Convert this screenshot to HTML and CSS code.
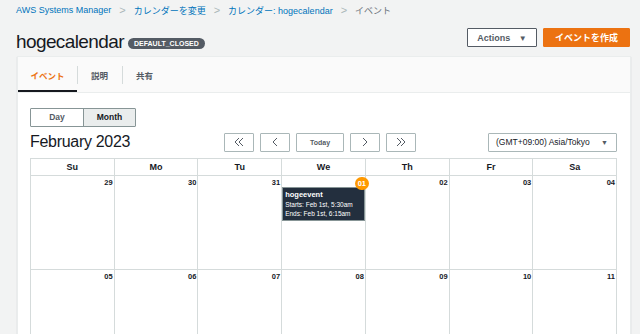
FILE: index.html
```html
<!DOCTYPE html>
<html lang="ja">
<head>
  <meta charset="UTF-8">
  <title>hogecalendar</title>
  <link rel="stylesheet" href="styles.css">
</head>
<body>
  <div class="breadcrumb">
    <a href="#">AWS Systems Manager</a>
    <span class="sep">&gt;</span>
    <a href="#">カレンダーを変更</a>
    <span class="sep">&gt;</span>
    <a href="#">カレンダー: hogecalendar</a>
    <span class="sep">&gt;</span>
    <span class="current">イベント</span>
  </div>

  <div class="header">
    <div class="title">
      <h1>hogecalendar</h1>
      <span class="badge">DEFAULT_CLOSED</span>
    </div>
    <div class="actions">
      <button type="button" class="btn">Actions <span class="caret">&#9660;</span></button>
      <button type="button" class="btn primary">イベントを作成</button>
    </div>
  </div>

  <div class="card">
    <div class="tabs">
      <div class="tab active">イベント</div>
      <div class="tab">説明</div>
      <div class="tab">共有</div>
    </div>
    <div class="content">
      <div class="segmented">
        <button type="button">Day</button>
        <button type="button" class="on">Month</button>
      </div>

      <div class="toolbar">
        <div class="month">February 2023</div>
        <div class="nav">
          <button type="button" class="navbtn">
            <svg width="10" height="10" viewBox="0 0 10 10"><path d="M5 1 1 5l4 4M9 1 5 5l4 4"/></svg>
          </button>
          <button type="button" class="navbtn">
            <svg width="10" height="10" viewBox="0 0 10 10"><path d="M7 1 3 5l4 4"/></svg>
          </button>
          <button type="button" class="navbtn today">Today</button>
          <button type="button" class="navbtn">
            <svg width="10" height="10" viewBox="0 0 10 10"><path d="M3 1l4 4-4 4"/></svg>
          </button>
          <button type="button" class="navbtn">
            <svg width="10" height="10" viewBox="0 0 10 10"><path d="M1 1l4 4-4 4M5 1l4 4-4 4"/></svg>
          </button>
        </div>
        <div class="tz">
          <div class="select">(GMT+09:00) Asia/Tokyo <span class="caret">&#9660;</span></div>
        </div>
      </div>

      <div class="calendar">
        <div class="dow">Su</div>
        <div class="dow">Mo</div>
        <div class="dow">Tu</div>
        <div class="dow">We</div>
        <div class="dow">Th</div>
        <div class="dow">Fr</div>
        <div class="dow">Sa</div>

        <div class="day"><span class="num">29</span></div>
        <div class="day"><span class="num">30</span></div>
        <div class="day"><span class="num">31</span></div>
        <div class="day">
          <span class="num today-num">01</span>
          <div class="event">
            <div class="ev-title">hogeevent</div>
            <div>Starts: Feb 1st, 5:30am</div>
            <div>Ends: Feb 1st, 6:15am</div>
          </div>
        </div>
        <div class="day"><span class="num">02</span></div>
        <div class="day"><span class="num">03</span></div>
        <div class="day"><span class="num">04</span></div>

        <div class="day"><span class="num">05</span></div>
        <div class="day"><span class="num">06</span></div>
        <div class="day"><span class="num">07</span></div>
        <div class="day"><span class="num">08</span></div>
        <div class="day"><span class="num">09</span></div>
        <div class="day"><span class="num">10</span></div>
        <div class="day"><span class="num">11</span></div>
      </div>
    </div>
  </div>
</body>
</html>
```

FILE: styles.css
```css
body {
  margin: 0;
  background-color: #f2f3f3;
  font-family: "Liberation Sans", "Noto Sans CJK JP", sans-serif;
  color: #16191f;
  overflow: hidden;
}

.breadcrumb {
  height: 18px;
  padding: 1px 16px 0;
  display: flex;
  align-items: center;
  gap: 8px;
  font-size: 9px;
}
.breadcrumb a {
  color: #0073bb;
  text-decoration: none;
}
.breadcrumb .sep {
  color: #aab7b8;
  font-size: 11px;
}
.breadcrumb .current {
  color: #687078;
}

.header {
  height: 37px;
  padding: 0 10px 0 16px;
  display: flex;
  justify-content: space-between;
  align-items: center;
}
.title {
  display: flex;
  align-items: center;
  gap: 4px;
  padding-top: 8px;
}
.title h1 {
  margin: 0;
  font-size: 19px;
  font-weight: 400;
  letter-spacing: -0.6px;
}
.badge {
  background-color: #545b64;
  color: #fff;
  font-size: 7px;
  font-weight: 700;
  padding: 2px 6px;
  border-radius: 8px;
  margin-top: 3px;
}
.actions {
  display: flex;
  gap: 6px;
}
.btn {
  height: 19px;
  width: 70px;
  padding: 0;
  border: 1px solid #545b64;
  border-radius: 1px;
  background: #fff;
  color: #545b64;
  font-family: inherit;
  font-size: 9px;
  font-weight: 700;
}
.btn .caret {
  font-size: 8px;
  margin-left: 6px;
}
.btn.primary {
  background-color: #ec7211;
  border-color: #ec7211;
  color: #fff;
  width: 87px;
}

.card {
  margin: 0 9px 0 17px;
  background: #fff;
  border: 1px solid #eaeded;
  box-shadow: 0 1px 1px rgba(0, 22, 40, 0.2);
}
.tabs {
  height: 35px;
  background-color: #fafafa;
  border-bottom: 1px solid #eaeded;
  display: flex;
  align-items: center;
}
.tab {
  height: 35px;
  box-sizing: border-box;
  padding: 0 14px;
  display: flex;
  align-items: center;
  font-size: 8.5px;
  font-weight: 700;
  color: #545b64;
  position: relative;
}
.tab + .tab::before {
  content: "";
  position: absolute;
  left: 0;
  top: 9px;
  bottom: 8px;
  border-left: 1px solid #d5dbdb;
}
.tab.active {
  color: #ec7211;
  width: 59px;
  justify-content: center;
  padding: 0;
  border-bottom: 2px solid #16191f;
  padding-top: 2px;
}

.content {
  padding: 13px 13px 0 12px;
}
.segmented {
  display: inline-flex;
  border: 1px solid #879596;
  border-radius: 1px;
}
.segmented button {
  height: 17px;
  width: 52px;
  border: none;
  background: #fff;
  font-family: inherit;
  font-size: 8.5px;
  font-weight: 700;
  color: #545b64;
}
.segmented button.on {
  background-color: #eaeded;
  color: #16191f;
  border-left: 1px solid #879596;
}

.toolbar {
  margin-top: 6px;
  display: grid;
  grid-template-columns: 1fr auto 1fr;
  align-items: center;
  height: 19px;
}
.month {
  font-size: 16px;
  letter-spacing: -0.3px;
}
.nav {
  display: flex;
  gap: 6px;
  margin-right: 7px;
}
.navbtn {
  width: 30px;
  height: 19px;
  border: 1px solid #aab7b8;
  border-radius: 1px;
  background: #fff;
  padding: 0;
  display: flex;
  align-items: center;
  justify-content: center;
}
.navbtn svg {
  fill: none;
  stroke: #545b64;
  stroke-width: 1;
}
.navbtn.today {
  width: 48px;
  font-family: inherit;
  font-size: 7px;
  font-weight: 700;
  color: #545b64;
}
.tz {
  display: flex;
  justify-content: flex-end;
}
.select {
  width: 129px;
  height: 19px;
  box-sizing: border-box;
  border: 1px solid #aab7b8;
  border-radius: 1px;
  padding: 0 8px 0 7px;
  display: flex;
  justify-content: space-between;
  align-items: center;
  font-size: 8.5px;
  color: #16191f;
}
.select .caret {
  font-size: 7px;
  color: #545b64;
}

.calendar {
  margin-top: 6px;
  display: grid;
  grid-template-columns: repeat(7, 1fr);
  grid-template-rows: 17px 94px 94px;
  border-left: 1px solid #d5dbdb;
  border-top: 1px solid #d5dbdb;
}
.dow {
  border-right: 1px solid #d5dbdb;
  border-bottom: 1px solid #d5dbdb;
  text-align: center;
  font-size: 9px;
  font-weight: 700;
  line-height: 16px;
}
.day {
  position: relative;
  border-right: 1px solid #d5dbdb;
  border-bottom: 1px solid #d5dbdb;
  padding-top: 2px;
  display: flex;
  flex-direction: column;
  align-items: flex-end;
}
.num {
  font-size: 7.5px;
  font-weight: 700;
  color: #16191f;
  padding-right: 1px;
  line-height: 10px;
}
.today-num {
  position: absolute;
  top: 1px;
  right: -4px;
  width: 14px;
  height: 13px;
  border-radius: 7px;
  background-color: #ff9900;
  color: #fff;
  text-align: center;
  line-height: 13px;
  padding: 0;
}
.event {
  align-self: stretch;
  margin-top: 9px;
  background-color: #232f3e;
  border: 1px solid #879596;
  color: #fff;
  font-size: 6.5px;
  line-height: 9px;
  padding: 1px 2px 2px;
}
.ev-title {
  font-size: 7.5px;
  font-weight: 700;
  line-height: 11px;
}
```
